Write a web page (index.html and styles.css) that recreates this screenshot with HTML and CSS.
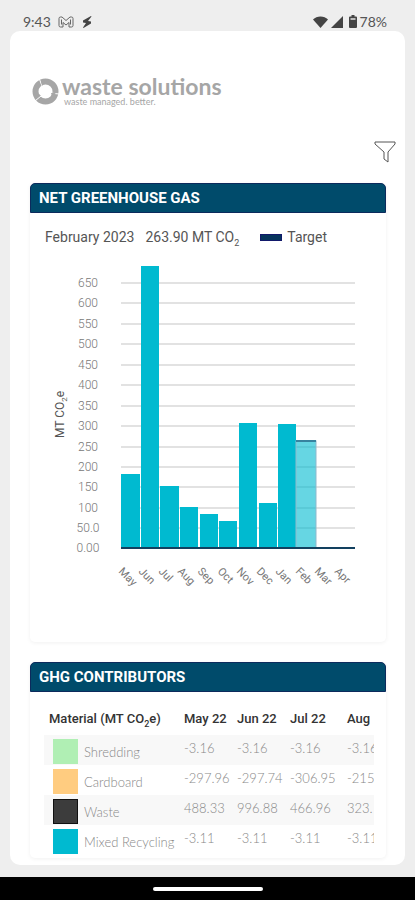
FILE: index.html
```html
<!DOCTYPE html>
<html lang="en">
<head>
    <meta charset="UTF-8">
    <meta name="viewport" content="width=device-width, initial-scale=1.0">
    <title>Waste Solutions</title>
    <link rel="stylesheet" href="styles.css">
</head>
<body>
    <div class="status-bar">
        <span class="time">9:43</span>
        <svg class="icon-mail" width="16" height="12" viewBox="0 0 16 12">
            <path d="M2.500 1H4L8 4.500 12 1h1.500Q15 1 15 2.500v7Q15 11 13.500 11H11V6.500L8 9 5 6.500V11H2.500Q1 11 1 9.500v-7Q1 1 2.500 1zM3.500 3.500v5M12.500 3.500v5"/>
        </svg>
        <svg class="icon-bolt" width="10" height="12" viewBox="0 0 10 12">
            <path d="M9 0L1 4.500v2l3 .5-3 4.500.5.500L9 7.500v-2L6 5l3.500-4.500z"/>
        </svg>
        <div class="status-right">
            <svg width="15" height="12" viewBox="0 0 15 12"><path d="M7.500 12L0 3.500Q3 .5 7.500.5T15 3.500z"/></svg>
            <svg width="12" height="12" viewBox="0 0 12 12"><path d="M12 0v12H0z"/></svg>
            <svg class="icon-battery" width="8" height="13" viewBox="0 0 8 13">
                <path d="M2.500 0h3v1.500H7q1 0 1 1V12q0 1-1 1H1q-1 0-1-1V2.500q0-1 1-1h1.500z"/>
                <path class="battery-empty" d="M1.500 3h5v2h-5z"/>
            </svg>
            <span>78%</span>
        </div>
    </div>

    <main class="screen">
        <header>
            <a class="logo" href="/">
                <svg width="27" height="27" viewBox="0 0 27 27">
                    <circle class="ring" cx="13.500" cy="13.500" r="10"/>
                    <path class="ring-gap" d="M10 8L7 0M18 15l9 1M9 18l-6 5"/>
                    <path class="ring-tip" d="M9 3l3 2-2 3zM24 15l-4 3-1-3zM4 18l3-2 2 2z"/>
                </svg>
                <span class="logo-text">
                    <strong>waste solutions</strong>
                    <small>waste managed. better.</small>
                </span>
            </a>
            <button class="filter" aria-label="Filter">
                <svg width="22" height="24" viewBox="0 0 22 24">
                    <path d="M1 2h20v2l-7 8v10l-4-3v-7L1 4z"/>
                </svg>
            </button>
        </header>

        <section class="panel">
            <h2>NET GREENHOUSE GAS</h2>
            <div class="legend">
                <span>February 2023</span>
                <span>263.90 MT CO<sub>2</sub></span>
                <span class="target">Target</span>
            </div>
            <svg class="chart" viewBox="0 0 356 387" role="img" aria-label="Net greenhouse gas by month">
                <path class="grid" d="M91 28H325M91 48H325M91 69H325M91 89H325M91 110H325M91 130H325M91 151H325M91 171H325M91 192H325M91 212H325M91 232H325M91 253H325M91 273H325"/>

                <g class="bars">
                    <rect x="91" y="219" width="19" height="74"/>
                    <rect x="111" y="11" width="18" height="282"/>
                    <rect x="130" y="231" width="19" height="62"/>
                    <rect x="150" y="252" width="18" height="41"/>
                    <rect x="170" y="259" width="18" height="34"/>
                    <rect x="189" y="266" width="18" height="27"/>
                    <rect x="209" y="168" width="18" height="125"/>
                    <rect x="229" y="248" width="18" height="45"/>
                    <rect x="248" y="169" width="18" height="124"/>
                </g>
                <rect class="current" x="266" y="186" width="20" height="107"/>
                <path class="current-top" d="M266 186h20"/>
                <path class="axis" d="M91 293H325"/>

                <g class="y-labels">
                    <text x="58" y="32">650</text>
                    <text x="58" y="52">600</text>
                    <text x="58" y="73">550</text>
                    <text x="58" y="93">500</text>
                    <text x="58" y="114">450</text>
                    <text x="58" y="134">400</text>
                    <text x="58" y="155">350</text>
                    <text x="58" y="175">300</text>
                    <text x="58" y="196">250</text>
                    <text x="58" y="216">200</text>
                    <text x="58" y="236">150</text>
                    <text x="58" y="257">100</text>
                    <text x="58" y="277">50.0</text>
                    <text x="58" y="297">0.00</text>
                </g>
                <text class="y-title" transform="translate(34 183) rotate(-90)">MT CO<tspan class="sub" dy="3">2</tspan><tspan dy="-3">e</tspan></text>

                <g class="x-labels">
                    <text transform="translate(88 317) rotate(45)">May</text>
                    <text transform="translate(108 317) rotate(45)">Jun</text>
                    <text transform="translate(128 317) rotate(45)">Jul</text>
                    <text transform="translate(147 317) rotate(45)">Aug</text>
                    <text transform="translate(167 317) rotate(45)">Sep</text>
                    <text transform="translate(187 317) rotate(45)">Oct</text>
                    <text transform="translate(206 317) rotate(45)">Nov</text>
                    <text transform="translate(226 317) rotate(45)">Dec</text>
                    <text transform="translate(245 317) rotate(45)">Jan</text>
                    <text transform="translate(265 317) rotate(45)">Feb</text>
                    <text transform="translate(284 317) rotate(45)">Mar</text>
                    <text transform="translate(304 317) rotate(45)">Apr</text>
                </g>
            </svg>
        </section>

        <section class="panel">
            <h2>GHG CONTRIBUTORS</h2>
            <div class="table-scroll">
                <table>
                    <colgroup>
                        <col class="col-material">
                        <col class="col-month">
                        <col class="col-month">
                        <col class="col-month-wide">
                        <col>
                    </colgroup>
                    <thead>
                        <tr><th>Material (MT CO<sub>2</sub>e)</th><th>May 22</th><th>Jun 22</th><th>Jul 22</th><th>Aug</th></tr>
                    </thead>
                    <tbody>
                        <tr><td><div class="material"><span class="swatch green"></span>Shredding</div></td><td>-3.16</td><td>-3.16</td><td>-3.16</td><td>-3.16</td></tr>
                        <tr><td><div class="material"><span class="swatch orange"></span>Cardboard</div></td><td>-297.96</td><td>-297.74</td><td>-306.95</td><td>-215.</td></tr>
                        <tr><td><div class="material"><span class="swatch dark"></span>Waste</div></td><td>488.33</td><td>996.88</td><td>466.96</td><td>323.</td></tr>
                        <tr><td><div class="material"><span class="swatch teal"></span>Mixed Recycling</div></td><td>-3.11</td><td>-3.11</td><td>-3.11</td><td>-3.11</td></tr>
                    </tbody>
                </table>
            </div>
        </section>
    </main>

    <footer class="nav-bar">
        <div class="pill"></div>
    </footer>
</body>
</html>
```
FILE: styles.css
```css
* {
    box-sizing: border-box;
}

body {
    display: flex;
    flex-direction: column;
    min-height: 100vh;
    margin: 0;
    background-color: #eeeeee;
    color: #555;
    font-family: Roboto, sans-serif;
}

/* Status bar */
.status-bar {
    display: flex;
    align-items: center;
    height: 31px;
    padding: 12px 28px 0 23px;
    font-family: Lato, sans-serif;
    font-size: 14px;
    line-height: 18px;
}

.status-bar svg {
    fill: #444;
}

.status-bar .icon-mail {
    margin: 0 8px 0 7px;
    fill: none;
    stroke: #666;
}

.status-right {
    display: flex;
    align-items: center;
    gap: 3px;
    margin-left: auto;
}

.status-right .icon-battery {
    margin-left: 3px;
}

.status-bar .battery-empty {
    fill: #bbb;
}

.screen {
    flex: 1;
    margin: 0 10px 12px;
    padding: 0 19px 6px 20px;
    background-color: #fff;
    border-radius: 10px;
}

/* Logo and filter */
header {
    display: flex;
    justify-content: space-between;
    align-items: flex-start;
    height: 152px;
    padding: 45px 0 0 2px;
}

.logo {
    display: flex;
    gap: 3px;
    color: #a6a6a6;
    text-decoration: none;
    font-family: Lato, sans-serif;
}

.logo svg {
    margin-top: 2px;
}

.ring {
    fill: none;
    stroke: #a6a6a6;
    stroke-width: 6;
}

.ring-gap {
    fill: none;
    stroke: #fff;
    stroke-width: 1;
}

.ring-tip {
    fill: #a6a6a6;
}

.logo-text strong {
    display: block;
    font-size: 23px;
    line-height: 20px;
    font-weight: 700;
}

.logo-text small {
    display: block;
    margin-left: 2px;
    font-size: 9px;
    line-height: 12px;
}

.filter {
    display: flex;
    margin: 64px -10px 0 0;
    padding: 0;
    border: none;
    background: none;
    cursor: pointer;
}

.filter svg {
    fill: #fff;
    stroke: #555;
}

/* Panels */
.panel {
    margin-bottom: 20px;
    border-radius: 5px;
    box-shadow: 0 1px 4px rgba(0, 0, 0, 0.06);
}

.panel:last-child {
    margin-bottom: 0;
    padding-bottom: 3px;
}

.panel h2 {
    margin: 0;
    padding: 0 8px;
    border: 1px solid #0c2a5c;
    border-radius: 5px 5px 0 0;
    background-color: #004b6b;
    color: #fff;
    font-size: 15px;
    line-height: 28px;
    font-weight: 700;
}

.legend {
    display: flex;
    gap: 11px;
    height: 42px;
    padding: 15px 15px 0;
    font-size: 14px;
    line-height: 18px;
}

sub {
    font-size: 9px;
    line-height: 1px;
}

.target {
    display: flex;
    align-items: center;
    gap: 5px;
    margin-left: 10px;
    height: 18px;
}

.target::before {
    content: "";
    width: 20px;
    height: 5px;
    border: 1px solid #12196b;
    background-color: #06345c;
}

/* Chart */
.chart {
    display: block;
    width: 100%;
}

.grid {
    stroke: #e2e2e2;
    stroke-width: 2;
}

.bars {
    fill: #00bad0;
}

.current {
    fill: #00bad0;
    fill-opacity: 0.6;
    stroke: #8fb9cc;
}

.current-top {
    stroke: #37839f;
    stroke-width: 2;
}

.axis {
    stroke: #12405f;
    stroke-width: 2;
}

.y-labels,
.x-labels {
    fill: #777;
    font-size: 12px;
}

.y-labels {
    font-weight: 300;
    text-anchor: middle;
}

.x-labels {
    font-size: 11px;
}

.y-title {
    fill: #555;
    font-size: 12px;
}

.sub {
    font-size: 8px;
}

/* Table */
.table-scroll {
    margin: 0 12px 0 14px;
    overflow-x: auto;
    scrollbar-width: none;
}

table {
    width: 100%;
    table-layout: fixed;
    border-collapse: collapse;
}

.col-material {
    width: 135px;
}

.col-month {
    width: 53px;
}

.col-month-wide {
    width: 57px;
}

th,
td {
    padding: 0 0 0 5px;
    text-align: left;
    white-space: nowrap;
}

th {
    height: 43px;
    padding-top: 10px;
    color: #333;
    font-size: 13px;
    font-weight: 500;
}

td {
    height: 30px;
    padding-top: 4px;
    color: #888;
    font-family: Lato, sans-serif;
    font-size: 13px;
    line-height: 18px;
    font-weight: 300;
    vertical-align: top;
}

tbody tr:nth-child(odd) {
    background-color: #f8f8f8;
}

.material {
    display: flex;
    align-items: center;
    gap: 6px;
    padding-left: 4px;
}

.swatch {
    width: 25px;
    height: 25px;
}

.green {
    background-color: #b0efb4;
}

.orange {
    background-color: #ffcc80;
}

.dark {
    border: 1px solid #111;
    background-color: #3c3c3c;
}

.teal {
    background-color: #00bad0;
}

/* Bottom navigation */
.nav-bar {
    display: flex;
    justify-content: center;
    align-items: center;
    height: 23px;
    background-color: #000;
}

.pill {
    width: 110px;
    height: 4px;
    border-radius: 2px;
    background-color: #fff;
}
```
